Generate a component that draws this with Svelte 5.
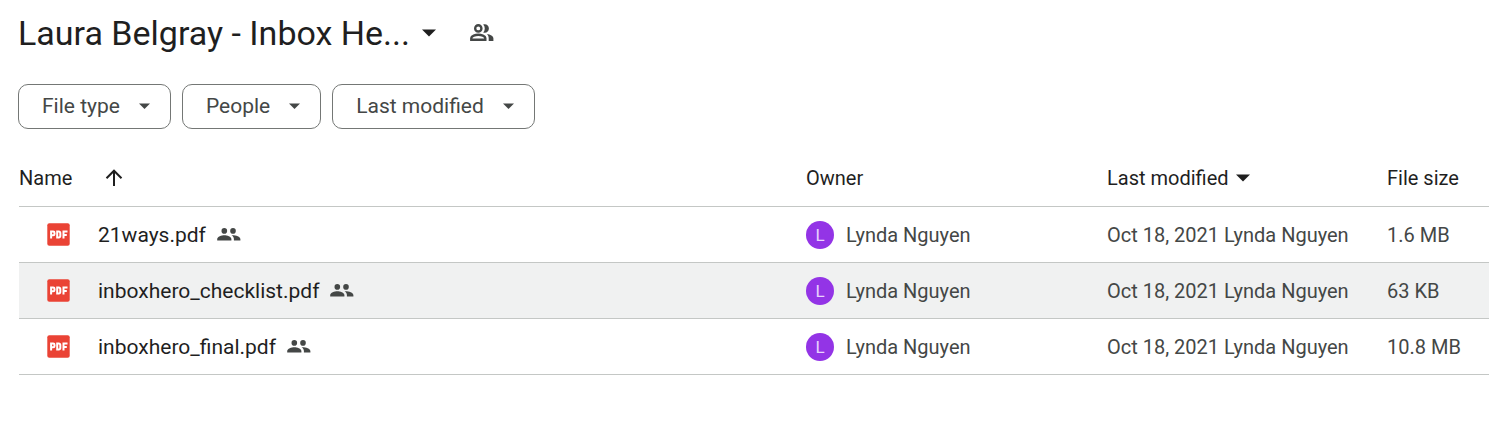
<script>
  const filters = ['File type', 'People', 'Last modified'];
  const files = [
    { name: '21ways.pdf', owner: 'Lynda Nguyen', date: 'Oct 18, 2021', size: '1.6 MB', active: false },
    { name: 'inboxhero_checklist.pdf', owner: 'Lynda Nguyen', date: 'Oct 18, 2021', size: '63 KB', active: true },
    { name: 'inboxhero_final.pdf', owner: 'Lynda Nguyen', date: 'Oct 18, 2021', size: '10.8 MB', active: false }
  ];
</script>

<main>
  <header>
    <h1>
      <button class="title">
        Laura Belgray - Inbox He...
        <svg width="14" height="8" viewBox="0 0 14 8" aria-hidden="true"><path d="M0 .5h14L7 7.5z" fill="currentColor" /></svg>
      </button>
    </h1>
    <button class="share" aria-label="Shared">
      <svg width="24" height="18" viewBox="0 0 24 18" aria-hidden="true">
        <circle cx="8.3" cy="4.4" r="3.1" fill="none" stroke="currentColor" stroke-width="2.4" />
        <path d="M1.3 15.7v-1.6c0-2.2 4.2-3.4 7-3.4s7 1.2 7 3.4v1.6z" fill="none" stroke="currentColor" stroke-width="2.4" />
        <path d="M13.2 8.4a5.9 5.9 0 0 0 0-8c3-1 5.7 1 5.7 4s-2.7 5-5.7 4z" fill="currentColor" />
        <path d="M17 9.9c3.2.5 6.4 1.9 6.4 4.3v2.7h-4.7v-2.7c0-1.8-.6-3.2-1.7-4.3z" fill="currentColor" />
      </svg>
    </button>
  </header>

  <div class="filters">
    {#each filters as filter}
      <button class="chip">
        {filter}
        <svg width="11" height="6" viewBox="0 0 11 6" aria-hidden="true"><path d="M0 .5h11L5.5 6z" fill="currentColor" /></svg>
      </button>
    {/each}
  </div>

  <table>
    <colgroup>
      <col />
      <col class="owner-col" />
      <col class="date-col" />
      <col class="size-col" />
    </colgroup>
    <thead>
      <tr>
        <th scope="col">
          <button class="sort name-sort">
            Name
            <svg width="18" height="18" viewBox="0 0 18 18" aria-hidden="true"><path d="M9 17V2M1.5 9.2 9 1.7l7.5 7.5" fill="none" stroke="currentColor" stroke-width="2" /></svg>
          </button>
        </th>
        <th scope="col">Owner</th>
        <th scope="col">
          <button class="sort">
            Last modified
            <svg width="14" height="8" viewBox="0 0 14 8" aria-hidden="true"><path d="M0 .5h14L7 7.5z" fill="currentColor" /></svg>
          </button>
        </th>
        <th scope="col">File size</th>
      </tr>
    </thead>
    <tbody>
      {#each files as file}
        <tr class:active={file.active}>
          <td>
            <div class="file">
              <svg class="pdf" width="23" height="23" viewBox="0 0 23 23" aria-hidden="true">
                <rect x=".3" y=".3" width="22.4" height="22.4" rx="2" fill="#ea4335" />
                <g fill="none" stroke="#fff" stroke-width="2">
                  <path d="M4.1 15.5V8.6h2.1a1.3 1.3 0 0 1 1.3 1.3v1a1.3 1.3 0 0 1-1.3 1.3H4.1" />
                  <path d="M10.2 8.6h1.7a1.4 1.4 0 0 1 1.4 1.4v3.1a1.4 1.4 0 0 1-1.4 1.4h-1.7z" />
                  <path d="M16.5 15.5V8.6h4M16.5 12h3.3" />
                </g>
              </svg>
              <span>{file.name}</span>
              <svg class="people" width="24" height="13" viewBox="0 0 24 13" role="img" aria-label="Shared">
                <g fill="currentColor">
                  <circle cx="7.3" cy="2.9" r="2.8" />
                  <circle cx="16" cy="2.9" r="2.8" />
                  <path d="M.2 12.6v-1.5c0-2.6 4.4-3.9 7.1-3.9s7.1 1.3 7.1 3.9v1.5z" />
                  <path d="M14.6 7.3c3.8-.2 8.8 1.2 8.8 3.9v1.4h-6.5v-1.4c0-1.7-.8-2.9-2.3-3.9z" />
                </g>
              </svg>
            </div>
          </td>
          <td>
            <div class="owner"><span class="avatar" aria-hidden="true">L</span>{file.owner}</div>
          </td>
          <td>{file.date} {file.owner}</td>
          <td>{file.size}</td>
        </tr>
      {/each}
    </tbody>
  </table>
</main>

<style>
  :global(body) {
    background: #fff;
  }
  main {
    padding: 11px 0 0 18px;
    font-family: Roboto, 'Liberation Sans', sans-serif;
    font-size: 20px;
    color: #1f1f1f;
  }
  button {
    font: inherit;
    color: inherit;
    background: none;
    border: 0;
    padding: 0;
    cursor: pointer;
  }
  svg {
    flex: none;
  }
  header {
    display: flex;
    align-items: center;
    gap: 34px;
  }
  h1 {
    margin: 0;
    font-size: 34px;
    font-weight: 400;
    line-height: 44px;
  }
  .title {
    display: flex;
    align-items: center;
    gap: 12px;
    white-space: nowrap;
  }
  .share {
    display: flex;
    color: #444746;
  }
  .filters {
    display: flex;
    gap: 11px;
    margin-top: 29px;
  }
  .chip {
    display: flex;
    align-items: center;
    gap: 19px;
    height: 45px;
    padding: 0 20px 2px 23px;
    border: 1px solid #747775;
    border-radius: 10px;
    color: #444746;
    font-size: 21px;
    white-space: nowrap;
  }
  table {
    width: 100%;
    margin-top: 22px;
    border-left: 1px solid transparent;
    border-spacing: 0;
    table-layout: fixed;
  }
  .owner-col {
    width: 301px;
  }
  .date-col {
    width: 280px;
  }
  .size-col {
    width: 102px;
  }
  th,
  td {
    box-sizing: border-box;
    height: 56px;
    padding: 0;
    border-bottom: 1px solid #c4c7c5;
    text-align: left;
    font-weight: 400;
    white-space: nowrap;
  }
  th {
    padding-bottom: 2px;
  }
  td {
    color: #444746;
  }
  .sort {
    display: flex;
    align-items: center;
    gap: 7px;
  }
  .name-sort {
    gap: 33px;
  }
  .active {
    background: #f0f1f1;
  }
  .file {
    display: flex;
    align-items: center;
    padding-left: 28px;
    color: #1f1f1f;
    font-size: 21px;
  }
  .pdf {
    margin-right: 28px;
  }
  .people {
    margin-left: 11px;
    color: #444746;
  }
  .owner {
    display: flex;
    align-items: center;
    gap: 12px;
  }
  .avatar {
    width: 28px;
    height: 28px;
    border-radius: 50%;
    background: #9334e6;
    color: #e9d2fd;
    font-size: 17px;
    line-height: 28px;
    text-align: center;
  }
</style>
